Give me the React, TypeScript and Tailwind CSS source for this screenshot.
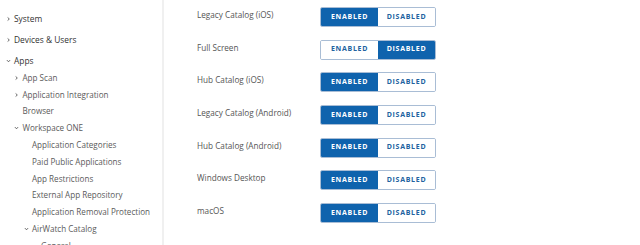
import React from "react";

type NavItem = {
  label: string;
  level: number;
  chevron?: "right" | "down";
  gapTop?: boolean;
};

const nav: NavItem[] = [
  { label: "System", level: 0, chevron: "right" },
  { label: "Devices & Users", level: 0, chevron: "right", gapTop: true },
  { label: "Apps", level: 0, chevron: "down", gapTop: true },
  { label: "App Scan", level: 1, chevron: "right" },
  { label: "Application Integration", level: 1, chevron: "right" },
  { label: "Browser", level: 1 },
  { label: "Workspace ONE", level: 1, chevron: "down" },
  { label: "Application Categories", level: 2 },
  { label: "Paid Public Applications", level: 2 },
  { label: "App Restrictions", level: 2 },
  { label: "External App Repository", level: 2 },
  { label: "Application Removal Protection", level: 2 },
  { label: "AirWatch Catalog", level: 2, chevron: "down" },
  { label: "General", level: 3 },
];

const settings = [
  { label: "Legacy Catalog (iOS)", enabled: true },
  { label: "Full Screen", enabled: false },
  { label: "Hub Catalog (iOS)", enabled: true },
  { label: "Legacy Catalog (Android)", enabled: true },
  { label: "Hub Catalog (Android)", enabled: true },
  { label: "Windows Desktop", enabled: true },
  { label: "macOS", enabled: true },
];

const textLeft = ["pl-[14px]", "pl-[22.5px]", "pl-[32px]", "pl-[41px]"];

function Chevron({ dir }: { dir: "right" | "down" }) {
  return (
    <svg width="5" height="5" viewBox="0 0 5 5" className="absolute -left-[8.5px] top-1/2 -translate-y-1/2">
      {dir === "right" ? (
        <path d="M1.6 0.9 L3.3 2.5 L1.6 4.1" fill="none" stroke="#444" strokeWidth="0.8" />
      ) : (
        <path d="M0.9 1.6 L2.5 3.3 L4.1 1.6" fill="none" stroke="#444" strokeWidth="0.8" />
      )}
    </svg>
  );
}

function Toggle({ enabled }: { enabled: boolean }) {
  const on = "bg-[#0f63ad] text-white";
  const off = "bg-white text-[#22629f]";
  return (
    <div className="flex h-[20px] w-[116px] rounded-[2px] border border-[#a9bdd5] overflow-hidden">
      <div className={`flex-1 flex items-center justify-center text-[7px] font-bold tracking-[0.1em] ${enabled ? on : off}`}>
        ENABLED
      </div>
      <div className={`flex-1 flex items-center justify-center text-[7px] font-bold tracking-[0.1em] ${enabled ? off : on}`}>
        DISABLED
      </div>
    </div>
  );
}

export default function App() {
  return (
    <div
      className="flex w-[640px] h-[245px] overflow-hidden bg-white"
      style={{ fontFamily: '"Open Sans", "Liberation Sans", sans-serif' }}
    >
      {/* Sidebar */}
      <div className="w-[164px] shrink-0 border-r-2 border-[#f0f0f0] pt-[11px]">
        {nav.map((item) => (
          <div
            key={item.label}
            className={`flex items-center h-[16.8px] whitespace-nowrap ${textLeft[item.level]} ${item.gapTop ? "mt-[4px]" : ""} ${item.level === 0 ? "text-[8.4px] text-[#333]" : "text-[8.1px] text-[#5a5a5a]"}`}
          >
            <span className="relative leading-none">
              {item.chevron && <Chevron dir={item.chevron} />}
              {item.label}
            </span>
          </div>
        ))}
      </div>

      {/* Settings */}
      <div className="flex-1 pl-[33px] pt-[7px] flex flex-col gap-[12.67px]">
        {settings.map((s) => (
          <div key={s.label} className="flex items-start">
            <div className="w-[123px] text-[8.2px] leading-[16px] text-[#555]">{s.label}</div>
            <Toggle enabled={s.enabled} />
          </div>
        ))}
      </div>
    </div>
  );
}
